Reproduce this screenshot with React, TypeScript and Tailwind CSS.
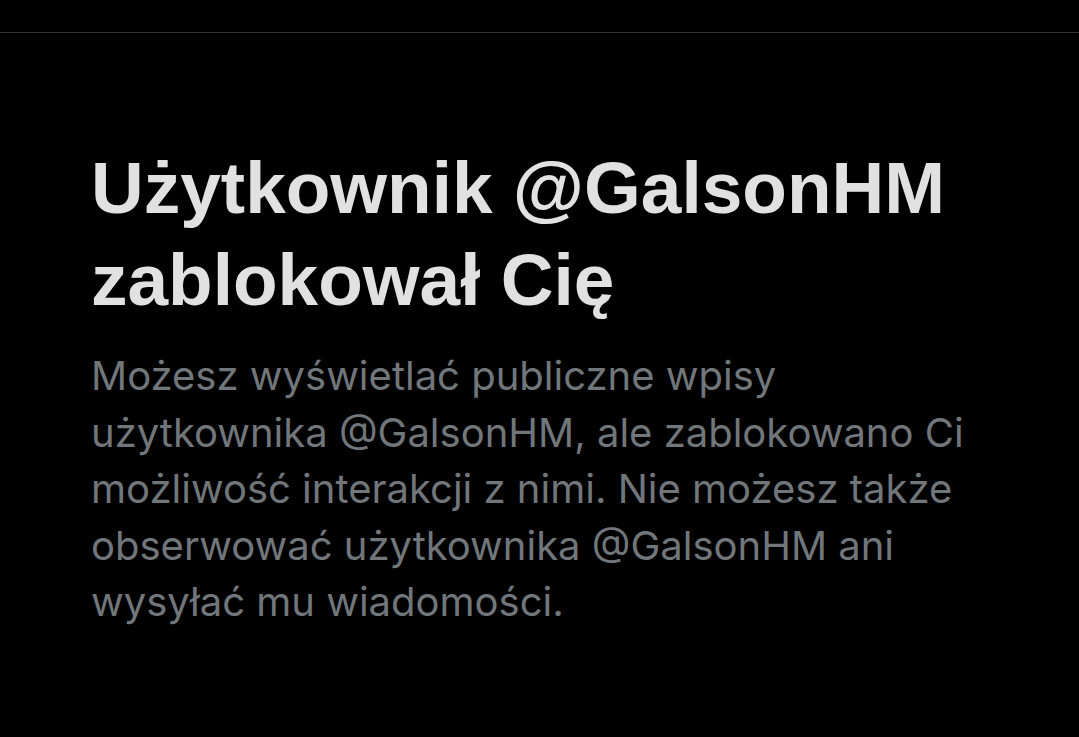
export default function App() {
  return (
    <div className="min-h-[737px] w-full bg-black">
      <div className="h-8" />
      <div className="border-t border-[#2f3336]" />
      <div className="pl-[91px] pt-[109px]">
        <div className="w-[900px]">
          <h1 className="font-['Liberation_Sans',Arial,sans-serif] text-[73px] font-bold leading-[92px] text-[#e1e1e1]">
            Użytkownik @GalsonHM zablokował Cię
          </h1>
          <p className="mt-[22px] font-['Inter',sans-serif] text-[40px] leading-[56.5px] text-[#71767b]">
            Możesz wyświetlać publiczne wpisy użytkownika @GalsonHM, ale zablokowano Ci możliwość interakcji z nimi. Nie możesz także obserwować użytkownika @GalsonHM ani wysyłać mu wiadomości.
          </p>
        </div>
      </div>
    </div>
  );
}
